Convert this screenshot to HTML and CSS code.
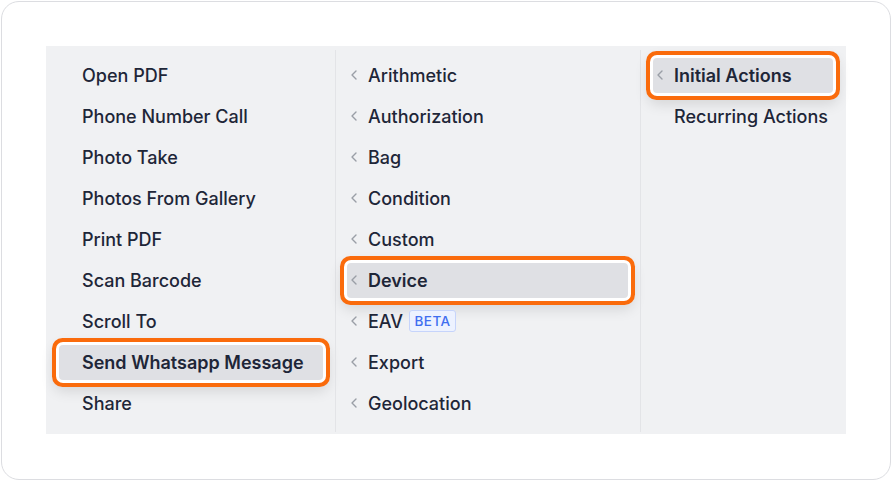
FILE: index.html
```html
<!DOCTYPE html>
<html>
<head>
<meta charset="utf-8">
<link rel="stylesheet" href="styles.css">
</head>
<body>
<div class="card">
  <div class="panel">
    <ul class="list col1">
      <li class="item">Open PDF</li>
      <li class="item">Phone Number Call</li>
      <li class="item">Photo Take</li>
      <li class="item">Photos From Gallery</li>
      <li class="item">Print PDF</li>
      <li class="item">Scan Barcode</li>
      <li class="item">Scroll To</li>
      <li class="item selected">Send Whatsapp Message</li>
      <li class="item">Share</li>
    </ul>
    <div class="divider"></div>
    <ul class="list col2">
      <li class="item sub"><svg class="chev" viewBox="0 0 6 10"><path d="M5 1 L1 5 L5 9"/></svg><span>Arithmetic</span></li>
      <li class="item sub"><svg class="chev" viewBox="0 0 6 10"><path d="M5 1 L1 5 L5 9"/></svg><span>Authorization</span></li>
      <li class="item sub"><svg class="chev" viewBox="0 0 6 10"><path d="M5 1 L1 5 L5 9"/></svg><span>Bag</span></li>
      <li class="item sub"><svg class="chev" viewBox="0 0 6 10"><path d="M5 1 L1 5 L5 9"/></svg><span>Condition</span></li>
      <li class="item sub"><svg class="chev" viewBox="0 0 6 10"><path d="M5 1 L1 5 L5 9"/></svg><span>Custom</span></li>
      <li class="item sub selected"><svg class="chev" viewBox="0 0 6 10"><path d="M5 1 L1 5 L5 9"/></svg><span>Device</span></li>
      <li class="item sub"><svg class="chev" viewBox="0 0 6 10"><path d="M5 1 L1 5 L5 9"/></svg><span>EAV</span><span class="badge">BETA</span></li>
      <li class="item sub"><svg class="chev" viewBox="0 0 6 10"><path d="M5 1 L1 5 L5 9"/></svg><span>Export</span></li>
      <li class="item sub"><svg class="chev" viewBox="0 0 6 10"><path d="M5 1 L1 5 L5 9"/></svg><span>Geolocation</span></li>
    </ul>
    <div class="divider"></div>
    <ul class="list col3">
      <li class="item sub selected"><svg class="chev" viewBox="0 0 6 10"><path d="M5 1 L1 5 L5 9"/></svg><span>Initial Actions</span></li>
      <li class="item sub plain"><span>Recurring Actions</span></li>
    </ul>
  </div>
</div>
</body>
</html>
```
FILE: styles.css
```css
* { box-sizing: border-box; }
html, body { margin: 0; padding: 0; background: #fff; }
body {
  font-family: Inter, "Noto Sans", sans-serif;
  width: 892px;
  height: 481px;
  overflow: hidden;
}
.card {
  margin: 1px;
  width: 890px;
  height: 479px;
  border: 1.5px solid #dcdde1;
  border-radius: 18px;
  background: #fff;
  padding: 44px 0 0 44px;
}
.panel {
  width: 800px;
  height: 388px;
  background: #f0f1f3;
  display: grid;
  grid-template-columns: 289px 1px 304px 1px 1fr;
}
.divider {
  background: #e3e4e7;
  margin: 4px 0 2px;
}
.list {
  list-style: none;
  margin: 0;
  padding: 11.5px 12px 0 12px;
  display: flex;
  flex-direction: column;
  gap: 6px;
}
.col1 { padding-left: 13px; }
.col2 { padding-left: 10.5px; padding-right: 12px; }
.col3 { padding-left: 11.5px; padding-right: 13px; }
.item {
  height: 35px;
  display: flex;
  align-items: center;
  font-size: 18px;
  font-weight: 500;
  color: #1e2638;
  border-radius: 4px;
  padding-left: 23px;
  white-space: nowrap;
}
.item.sub {
  padding-left: 4px;
  gap: 11.5px;
}
.item.plain { padding-left: 21.5px; }
.chev {
  width: 6px;
  height: 10px;
  flex: none;
  fill: none;
  stroke: #9a9ea6;
  stroke-width: 1.4;
  stroke-linecap: round;
  stroke-linejoin: round;
}
.item.selected {
  background: #dfe0e4;
  font-weight: 600;
  box-shadow: 0 0 0 3px #fff, 0 0 0 7px #fa6b0c, 0 6px 14px 5px rgba(0,0,0,0.12);
}
.badge {
  margin-left: -6px;
  height: 22px;
  padding: 0 5px;
  display: inline-flex;
  align-items: center;
  font-size: 13.5px;
  font-weight: 500;
  letter-spacing: 0.4px;
  color: #3f6ef0;
  background: #edf2ff;
  border: 1px solid #c6d4fb;
  border-radius: 3px;
}
```
